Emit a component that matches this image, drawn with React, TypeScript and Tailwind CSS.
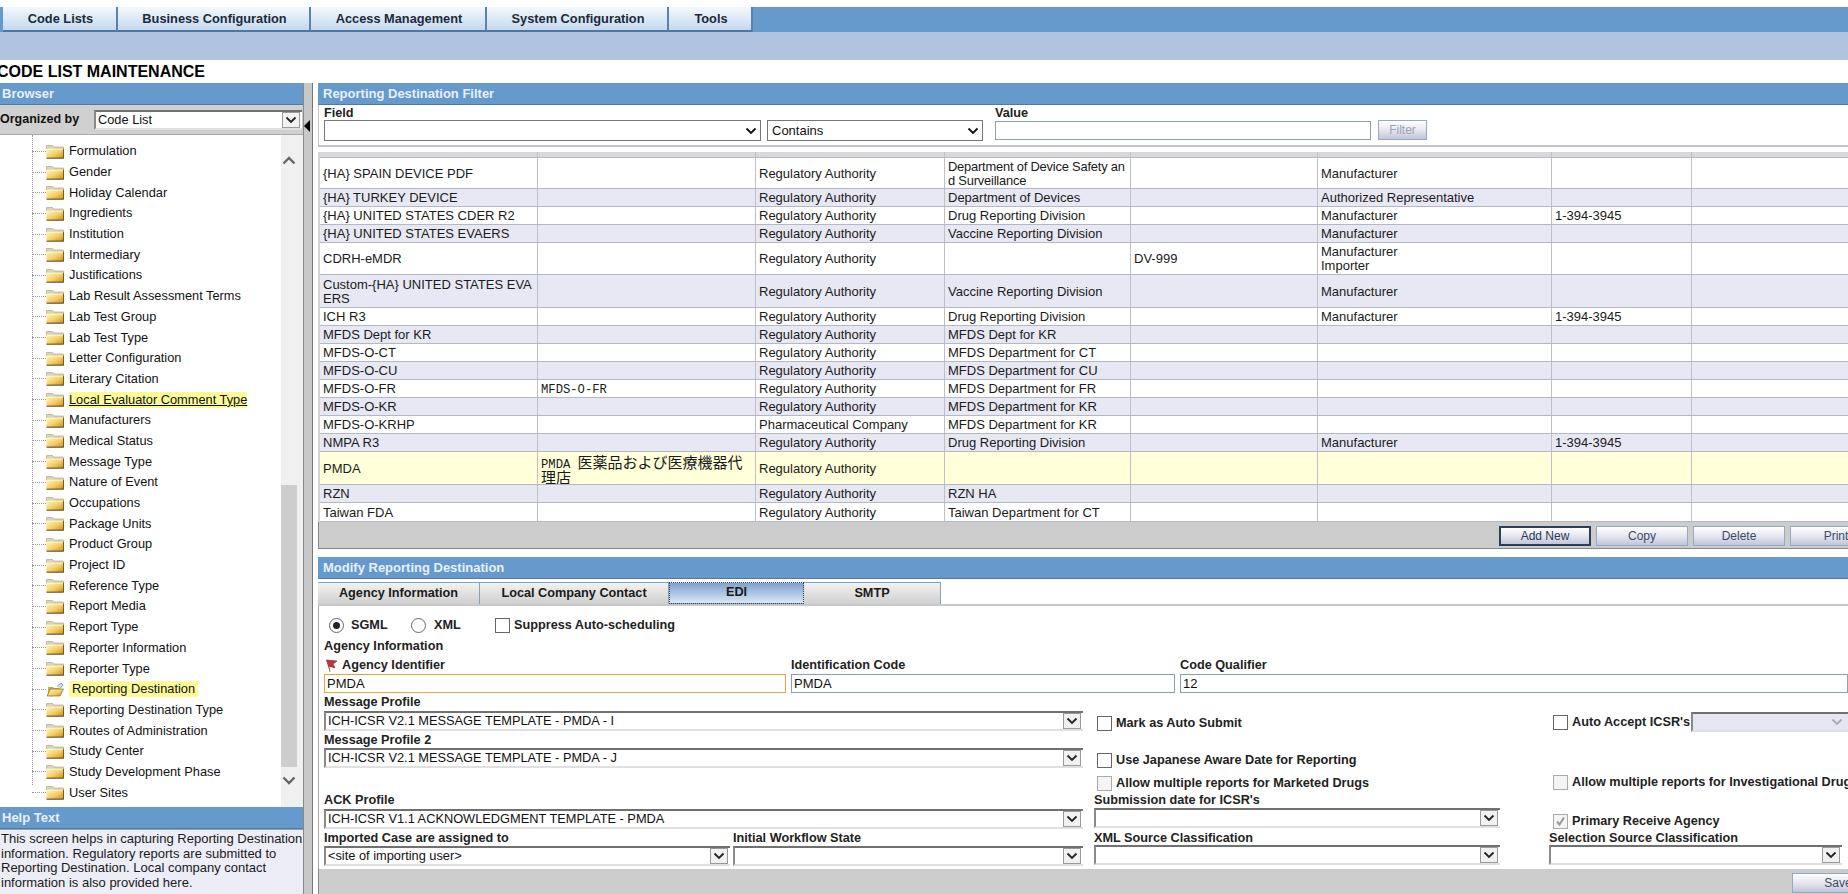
import React from "react";

const F = "[font-family:'Liberation_Sans',Arial,sans-serif]";
const MONO = "[font-family:'Liberation_Mono',monospace]";
const CJK = "[font-family:'Noto_Sans_CJK_JP',sans-serif]";

function Folder({ open }: { open?: boolean }) {
  return (
    <svg width="18" height="15" viewBox="0 0 18 15" className="shrink-0">
      <defs>
        <linearGradient id="fg" x1="0" y1="0" x2="1" y2="1">
          <stop offset="0" stopColor="#fff6c4" />
          <stop offset="0.55" stopColor="#f4cf62" />
          <stop offset="1" stopColor="#c9901c" />
        </linearGradient>
      </defs>
      {open ? (
        <>
          <path d="M2 5h5l1 1h6v7H2z" fill="#c9a84a" />
          <path d="M4.5 7h13l-3.5 7H1z" fill="url(#fg)" stroke="#8a6a20" strokeWidth="0.7" />
          <path d="M11 4.5l4-3.5 2 2-3 3.5" fill="#cfe0f4" stroke="#5a86b8" strokeWidth="0.8" />
        </>
      ) : (
        <>
          <path d="M0.5 1.5h6l1.5 1.5h9.5v2H0.5z" fill="#d9d3b8" stroke="#a89f80" strokeWidth="0.6" />
          <rect x="0.5" y="4.5" width="17" height="9.5" fill="url(#fg)" />
          <path d="M0.5 14.2h17.2V4.8" fill="none" stroke="#4f3f18" strokeWidth="1" />
          <path d="M1 5.2h16" stroke="#fffbe4" strokeWidth="0.8" />
        </>
      )}
    </svg>
  );
}

const treeItems = [
  "Formulation","Gender","Holiday Calendar","Ingredients","Institution","Intermediary","Justifications","Lab Result Assessment Terms","Lab Test Group","Lab Test Type","Letter Configuration","Literary Citation","Local Evaluator Comment Type","Manufacturers","Medical Status","Message Type","Nature of Event","Occupations","Package Units","Product Group","Project ID","Reference Type","Report Media","Report Type","Reporter Information","Reporter Type","Reporting Destination","Reporting Destination Type","Routes of Administration","Study Center","Study Development Phase","User Sites",
];

function TreeRow({ label }: { label: string }) {
  const current = label === "Reporting Destination";
  const marked = label === "Local Evaluator Comment Type";
  return (
    <div className="flex items-center h-[20.7px] pl-[32px]">
      <span className="w-[14px] border-t border-dotted border-[#999]" />
      <Folder open={current} />
      <span
        className={
          "ml-[5px] text-[12.8px] leading-[16px] text-[#111] whitespace-nowrap " +
          (current ? "bg-[#fdfb98] px-[3px] " : "") +
          (marked ? "bg-[#fdfb98] underline " : "")
        }
      >
        {label}
      </span>
    </div>
  );
}

function Header({ children, left }: { children: React.ReactNode; left?: boolean }) {
  return (
    <div className={"h-[22px] shrink-0 bg-[#6699cc] border-b border-[#55789c] text-[#e8f0fa] font-bold text-[13px] leading-[21px] " + (left ? "pl-[2px]" : "pl-[5px]")}>
      {children}
    </div>
  );
}

function Chevron({ color = "#222" }: { color?: string }) {
  return (
    <svg width="12" height="8" viewBox="0 0 12 8">
      <path d="M1.5 1.5L6 6l4.5-4.5" fill="none" stroke={color} strokeWidth="1.8" />
    </svg>
  );
}

function Select({ w, value, disabled }: { w: string; value?: string; disabled?: boolean }) {
  return (
    <div
      className={
        "flex items-stretch h-[20px] border-t-2 border-l-2 border-t-[#707070] border-l-[#8a8a8a] border-b-2 border-b-[#e0e0e0] text-[12.8px] leading-[16px] " +
        w +
        (disabled ? " bg-[#e6e6f2]" : " bg-white")
      }
    >
      <span className="flex-1 pl-[2px] whitespace-nowrap overflow-hidden text-[#111]">{value}</span>
      <span
        className={
          "w-[18px] mr-[2px] flex items-center justify-center " +
          (disabled ? "" : "bg-[#f1f1f1] border border-[#9a9a9a]")
        }
      >
        <Chevron color={disabled ? "#aaa" : "#222"} />
      </span>
    </div>
  );
}

function Check({ checked, dim }: { checked?: boolean; dim?: boolean }) {
  return (
    <span className={"inline-flex items-center justify-center w-[15px] h-[15px] border shrink-0 " + (dim ? "border-[#aaa] bg-[#f4f4f4]" : "border-[#666] bg-white")}>
      {checked && (
        <svg width="11" height="11" viewBox="0 0 11 11">
          <path d="M2 5.5l2.5 3L9 1.5" fill="none" stroke="#999" strokeWidth="2" />
        </svg>
      )}
    </span>
  );
}

function Label({ children, className = "" }: { children: React.ReactNode; className?: string }) {
  return <div className={"text-[12.7px] leading-[16px] font-bold text-[#222] whitespace-nowrap " + className}>{children}</div>;
}

function CheckRow({ label, className = "", checked, dim }: { label: string; className?: string; checked?: boolean; dim?: boolean }) {
  return (
    <div className={"flex items-center gap-[4px] " + className}>
      <Check checked={checked} dim={dim} />
      <Label>{label}</Label>
    </div>
  );
}

function Button({ label, w, focus, dim }: { label: string; w: string; focus?: boolean; dim?: boolean }) {
  return (
    <div
      className={
        "h-[20px] flex items-center justify-center text-[12px] bg-gradient-to-b from-[#ffffff] via-[#e6e6f0] to-[#c2c5da] shrink-0 " +
        w +
        (focus ? " border-2 border-[#2c3f5a] text-[#2a3a55]" : " border border-[#93a9c4]") +
        (dim ? " text-[#9aa3b5]" : focus ? "" : " text-[#3b4a66]")
      }
    >
      {label}
    </div>
  );
}

type Row = { h: string; c: (string | React.ReactNode)[] };
const reg = "Regulatory Authority";
const rows: Row[] = [
  {
    h: "h-[31px]",
    c: [
      "{HA} SPAIN DEVICE PDF",
      "",
      reg,
      <span className="block whitespace-pre tracking-[-0.2px] text-[12.9px]">{"Department of Device Safety an\nd Surveillance"}</span>,
      "",
      "Manufacturer",
      "",
      "",
    ],
  },
  { h: "h-[18px]", c: ["{HA} TURKEY DEVICE", "", reg, "Department of Devices", "", "Authorized Representative", "", ""] },
  { h: "h-[18px]", c: ["{HA} UNITED STATES CDER R2", "", reg, "Drug Reporting Division", "", "Manufacturer", "1-394-3945", ""] },
  { h: "h-[18px]", c: ["{HA} UNITED STATES EVAERS", "", reg, "Vaccine Reporting Division", "", "Manufacturer", "", ""] },
  { h: "h-[32px]", c: ["CDRH-eMDR", "", reg, "", "DV-999", "Manufacturer\nImporter", "", ""] },
  { h: "h-[33px]", c: ["Custom-{HA} UNITED STATES EVAERS", "", reg, "Vaccine Reporting Division", "", "Manufacturer", "", ""] },
  { h: "h-[18px]", c: ["ICH R3", "", reg, "Drug Reporting Division", "", "Manufacturer", "1-394-3945", ""] },
  { h: "h-[18px]", c: ["MFDS Dept for KR", "", reg, "MFDS Dept for KR", "", "", "", ""] },
  { h: "h-[18px]", c: ["MFDS-O-CT", "", reg, "MFDS Department for CT", "", "", "", ""] },
  { h: "h-[18px]", c: ["MFDS-O-CU", "", reg, "MFDS Department for CU", "", "", "", ""] },
  { h: "h-[18px]", c: ["MFDS-O-FR", <span className={MONO + " text-[12.2px]"}>MFDS-O-FR</span>, reg, "MFDS Department for FR", "", "", "", ""] },
  { h: "h-[18px]", c: ["MFDS-O-KR", "", reg, "MFDS Department for KR", "", "", "", ""] },
  { h: "h-[18px]", c: ["MFDS-O-KRHP", "", "Pharmaceutical Company", "MFDS Department for KR", "", "", "", ""] },
  { h: "h-[18px]", c: ["NMPA R3", "", reg, "Drug Reporting Division", "", "Manufacturer", "1-394-3945", ""] },
  {
    h: "h-[33px]",
    c: [
      "PMDA",
      <span className="block leading-[0px]">
        <span className={MONO + " text-[12.2px] leading-[0px]"}>PMDA </span>
        <span className={CJK + " text-[15px] leading-[15px]"}>医薬品および医療機器代理店</span>
      </span>,
      reg, "", "", "", "", "",
    ],
  },
  { h: "h-[18px]", c: ["RZN", "", reg, "RZN HA", "", "", "", ""] },
  { h: "h-[19px]", c: ["Taiwan FDA", "", reg, "Taiwan Department for CT", "", "", "", ""] },
];
const colW = ["w-[218px]", "w-[218px]", "w-[189px]", "w-[186px]", "w-[187px]", "w-[234px]", "w-[140px]", "flex-1"];

function TableRow({ row, i }: { row: Row; i: number }) {
  const selected = row.c[0] === "PMDA";
  const bg = selected ? "bg-[#ffffd9]" : i % 2 === 0 ? "bg-white" : "bg-[#e8e8f4]";
  return (
    <div className={"flex items-stretch border-b border-[#b4b8c4] " + bg + " " + row.h}>
      {row.c.map((v, j) => (
        <div
          key={j}
          className={
            "flex items-center px-[3px] pt-[1px] overflow-hidden text-[13px] leading-[14px] text-[#1a1a1a] [word-break:break-all] whitespace-pre-line " +
            colW[j] +
            (j < 7 ? " border-r border-[#bdc0c8]" : "")
          }
        >
          <div>{v}</div>
        </div>
      ))}
    </div>
  );
}

const topTabs: [string, string][] = [
  ["Code Lists", "w-[115px]"],
  ["Business Configuration", "w-[193px]"],
  ["Access Management", "w-[176px]"],
  ["System Configuration", "w-[182px]"],
  ["Tools", "w-[84px]"],
];

const subTabs: [string, string, boolean][] = [
  ["Agency Information", "w-[162px]", false],
  ["Local Company Contact", "w-[189px]", false],
  ["EDI", "w-[135px]", true],
  ["SMTP", "w-[137px]", false],
];

export default function App() {
  return (
    <div className={"w-[1848px] h-[894px] overflow-hidden bg-white flex flex-col " + F}>
      <div className="h-[7px] shrink-0" />
      <div className="h-[25px] shrink-0 bg-[#6699cc] flex pl-[3px]">
        {topTabs.map(([t, w]) => (
          <div
            key={t}
            className={"flex items-center justify-center pl-[2px] h-[25px] border-r-2 border-b-2 border-r-[#5a82ac] border-b-[#4d76a3] bg-gradient-to-b from-[#f4f8fc] to-[#c4daf0] text-[12.8px] font-bold text-[#1c2a3a] " + w}
          >
            {t}
          </div>
        ))}
      </div>
      <div className="h-[28px] shrink-0 bg-[#b0c4e0]" />
      <div className="h-[23px] shrink-0 text-[16px] leading-[23px] font-bold text-black -ml-[3px] whitespace-nowrap">CODE LIST MAINTENANCE</div>

      <div className="flex-1 flex min-h-0">
        {/* left */}
        <div className="w-[304px] shrink-0 flex flex-col border-r border-[#888] bg-white">
          <Header left>Browser</Header>
          <div className="h-[30px] shrink-0 bg-[#d0d0d0] flex items-center border-b border-[#aaa]">
            <span className="text-[12.5px] font-bold text-[#111] w-[94px] whitespace-nowrap">Organized by</span>
            <Select w="w-[208px]" value="Code List" />
          </div>
          <div className="flex-1 min-h-0 flex relative">
            <div className="flex-1 pt-[6px] relative">
              <div className="absolute left-[32px] top-0 h-[650px] border-l border-dotted border-[#999]" />
              {treeItems.map((t) => (
                <TreeRow key={t} label={t} />
              ))}
            </div>
            <div className="w-[22px] shrink-0 bg-[#f0f0f0] flex flex-col pr-[6px]">
              <div className="h-[30px] shrink-0 flex items-end justify-center">
                <svg width="14" height="9" viewBox="0 0 14 9">
                  <path d="M1.5 7.5L7 2l5.5 5.5" fill="none" stroke="#666" strokeWidth="2.4" />
                </svg>
              </div>
              <div className="h-[320px] shrink-0" />
              <div className="w-[16px] flex-1 bg-[#cdcdcd]" />
              <div className="h-[40px] shrink-0 flex items-start justify-center pt-[9px]">
                <svg width="14" height="9" viewBox="0 0 14 9">
                  <path d="M1.5 1.5L7 7l5.5-5.5" fill="none" stroke="#666" strokeWidth="2.4" />
                </svg>
              </div>
            </div>
          </div>
          <Header left>Help Text</Header>
          <div className="h-[65px] shrink-0 bg-[#ecedf7] border-t border-[#8aa] px-[1px] pt-[2px] text-[13px] leading-[14.6px] text-[#1a1a1a] whitespace-nowrap">
            This screen helps in capturing Reporting Destination
            <br />
            information. Regulatory reports are submitted to
            <br />
            Reporting Destination. Local company contact
            <br />
            information is also provided here.
          </div>
        </div>

        {/* splitter */}
        <div className="w-[9px] shrink-0 bg-[#c8c8c8] relative border-r border-[#777]">
          <span className="absolute left-[0px] top-[37px] w-0 h-0 border-y-[6px] border-y-transparent border-r-[6px] border-r-black" />
        </div>
        <div className="w-[5px] shrink-0 bg-white" />

        {/* right */}
        <div className="flex-1 min-w-0 flex flex-col overflow-hidden">
          <Header>Reporting Destination Filter</Header>
          <div className="h-[42px] shrink-0 bg-white border-b-2 border-l border-[#c4c4c4] flex pl-[5px] gap-[6px]">
            <div className="w-[437px]">
              <Label className="h-[15px] leading-[15px]">Field</Label>
              <FilterSelect w="w-full" />
            </div>
            <div className="w-[216px] pt-[15px]">
              <FilterSelect w="w-full" value="Contains" />
            </div>
            <div className="ml-[6px]">
              <Label className="h-[15px] leading-[15px]">Value</Label>
              <div className="flex gap-[7px]">
                <div className="w-[376px] h-[19px] mt-[1px] border border-[#8aa0b4]" />
                <Button label="Filter" w="w-[49px]" dim />
              </div>
            </div>
          </div>
          <div className="h-[5px] shrink-0 bg-white" />
          <div className="shrink-0 pl-[2px] bg-[#d4d4d4]">
            <div className="h-[6px] flex bg-[#d8d8dc] border-b border-[#bbb]">
              {colW.map((w, i) => (
                <div key={i} className={w + (i < 7 ? " border-r border-[#bdc0c8]" : "")} />
              ))}
            </div>
            {rows.map((r, i) => (
              <TableRow key={i} row={r} i={i} />
            ))}
          </div>
          <div className="h-[27px] shrink-0 bg-[#cccccc] border-b border-l border-[#888] flex justify-start gap-[5px] pl-[1180px] pt-[4px]">
            <Button label="Add New" w="w-[92px]" focus />
            <Button label="Copy" w="w-[92px]" />
            <Button label="Delete" w="w-[92px]" />
            <Button label="Print" w="w-[92px]" />
          </div>
          <div className="h-[8px] shrink-0 bg-white" />
          <Header>Modify Reporting Destination</Header>
          <div className="h-[3px] shrink-0 bg-white" />
          <div className="h-[24px] shrink-0 flex border-b-2 border-[#c8c8c8] bg-white">
            {subTabs.map(([t, w, active]) => (
              <div
                key={t}
                className={
                  "flex items-center justify-center text-[12.7px] font-bold text-[#1a1a1a] bg-gradient-to-b " +
                  w +
                  (active
                    ? " from-[#7da3cf] to-[#dbe6f4] border border-dotted border-[#345]"
                    : " from-[#f2f2f2] to-[#cfcfcf] border-r border-t border-[#8aa0b8]")
                }
              >
                {t}
              </div>
            ))}
          </div>

          <div className="h-[263px] shrink-0 bg-white border-l border-[#aaa] pl-[5px] pt-[9px]">
            <div className="h-[20px] flex items-center">
              <span className="ml-[5px] w-[15px] h-[15px] rounded-full border border-[#666] flex items-center justify-center">
                <span className="w-[7px] h-[7px] rounded-full bg-[#222]" />
              </span>
              <Label className="ml-[7px] w-[60px]">SGML</Label>
              <span className="w-[15px] h-[15px] rounded-full border border-[#666]" />
              <Label className="ml-[8px] w-[61px]">XML</Label>
              <CheckRow label="Suppress Auto-scheduling" />
            </div>
            <Label className="h-[20px] leading-[22px]">Agency Information</Label>
            <div className="flex h-[19px] items-center pt-[1px]">
              <div className="w-[467px] flex items-center gap-[4px]">
                <svg width="14" height="13" viewBox="0 0 14 13">
                  <path d="M2 1l11 1-4 3 2 4-6-2 1 6" fill="#c0333a" stroke="#7a1f22" strokeWidth="0.6" />
                </svg>
                <Label>Agency Identifier</Label>
              </div>
              <Label className="w-[389px]">Identification Code</Label>
              <Label>Code Qualifier</Label>
            </div>
            <div className="flex h-[19px] gap-[5px]">
              <div className="w-[462px] border border-[#e8a33d] text-[13px] leading-[17px] pl-[2px] text-[#111]">PMDA</div>
              <div className="w-[384px] border border-[#8aa0b4] text-[13px] leading-[17px] pl-[2px] text-[#111]">PMDA</div>
              <div className="flex-1 border border-[#8aa0b4] text-[13px] leading-[17px] pl-[2px] text-[#111]">12</div>
            </div>
            <div className="flex">
              <div className="w-[759px]">
                <Label className="h-[17px] mt-[1px]">Message Profile</Label>
                <Select w="w-full" value="ICH-ICSR V2.1 MESSAGE TEMPLATE - PMDA - I" />
                <Label className="h-[17px] leading-[18px]">Message Profile 2</Label>
                <Select w="w-full" value="ICH-ICSR V2.1 MESSAGE TEMPLATE - PMDA - J" />
                <Label className="h-[18px] mt-[23px] leading-[18px]">ACK Profile</Label>
                <Select w="w-full" value="ICH-ICSR V1.1 ACKNOWLEDGMENT TEMPLATE - PMDA" />
                <div className="flex gap-[3px]">
                  <div className="w-[406px]">
                    <Label className="h-[17px] leading-[19px]">Imported Case are assigned to</Label>
                    <Select w="w-full" value="<site of importing user>" />
                  </div>
                  <div className="w-[350px]">
                    <Label className="h-[17px] leading-[19px]">Initial Workflow State</Label>
                    <Select w="w-full" />
                  </div>
                </div>
              </div>
              <div className="w-[406px] ml-[11px]">
                <CheckRow label="Mark as Auto Submit" className="h-[18px] mt-[21px] ml-[3px]" />
                <CheckRow label="Use Japanese Aware Date for Reporting" className="h-[18px] mt-[19px] ml-[3px]" />
                <CheckRow label="Allow multiple reports for Marketed Drugs" className="h-[18px] mt-[5px] ml-[3px]" dim />
                <Label className="h-[16px]">Submission date for ICSR's</Label>
                <Select w="w-full" />
                <Label className="h-[16px] mt-[1px] leading-[18px]">XML Source Classification</Label>
                <Select w="w-full" />
              </div>
              <div className="ml-[49px] flex-1 min-w-0 whitespace-nowrap">
                <div className="flex items-center gap-[4px] h-[22px] mt-[18px] ml-[4px]">
                  <Check />
                  <Label>Auto Accept ICSR's</Label>
                  <Select w="w-[160px] -ml-[3px]" disabled />
                </div>
                <CheckRow label="Allow multiple reports for Investigational Drugs" className="h-[18px] mt-[40px] ml-[4px]" dim />
                <CheckRow label="Primary Receive Agency" className="h-[18px] mt-[21px] ml-[4px]" checked dim />
                <Label className="h-[15px]">Selection Source Classification</Label>
                <Select w="w-[293px]" />
              </div>
            </div>
          </div>
          <div className="flex-1 bg-[#cccccc] border-l border-[#888] pl-[1473px] pt-[4px]">
            <Button label="Save" w="w-[92px]" />
          </div>
        </div>
      </div>
    </div>
  );
}

function FilterSelect({ w, value }: { w: string; value?: string }) {
  return (
    <div className={"flex items-center h-[21px] border border-[#777] bg-white text-[13px] pl-[4px] text-[#111] " + w}>
      <span className="flex-1">{value}</span>
      <span className="mr-[3px] flex"><Chevron color="#111" /></span>
    </div>
  );
}
